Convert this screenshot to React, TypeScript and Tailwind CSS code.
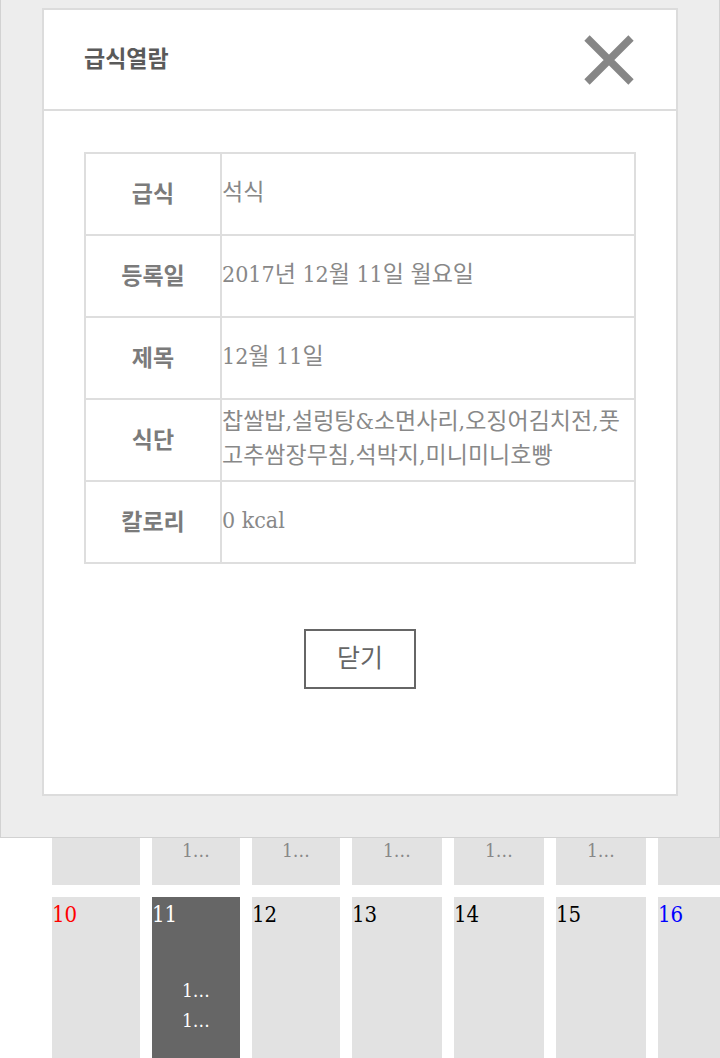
import { Fragment } from "react"

const serif = "font-['DejaVu_Serif_Condensed','DejaVu_Serif','Noto_Sans_CJK_KR',serif]"
const sans = "font-['Noto_Sans_CJK_KR','Noto_Sans',sans-serif]"

const widths = ["w-[88px]", "w-[88px]", "w-[88px]", "w-[90px]", "w-[90px]", "w-[90px]", "w-[90px]"]

const week = [
  { day: "10", color: "text-[#ff0000]" },
  { day: "11", color: "text-white", active: true },
  { day: "12", color: "text-black" },
  { day: "13", color: "text-black" },
  { day: "14", color: "text-black" },
  { day: "15", color: "text-black" },
  { day: "16", color: "text-[#0000ff]" },
]

const rows = [
  { label: "급식", value: "석식" },
  { label: "등록일", value: "2017년 12월 11일 월요일" },
  { label: "제목", value: "12월 11일" },
  { label: "식단", value: "찹쌀밥,설렁탕&소면사리,오징어김치전,풋고추쌈장무침,석박지,미니미니호빵" },
  { label: "칼로리", value: "0 kcal" },
]

const Calendar = () => (
  <div className={`h-[1058px] overflow-hidden pl-[52px] pt-[765px] ${serif}`}>
    <div className="flex gap-3">
      {widths.map((w, i) => (
        <div key={i} className={`${w} h-[120px] shrink-0 bg-[#e2e2e2] flex items-end justify-center pb-[20px]`}>
          {i > 0 && i < 6 && <span className="text-[19px] leading-[30px] text-[#888]">1…</span>}
        </div>
      ))}
    </div>
    <div className="mt-3 flex gap-3">
      {week.map((d, i) => (
        <div
          key={d.day}
          className={`${widths[i]} h-[170px] shrink-0 flex flex-col ${d.active ? "bg-[#666]" : "bg-[#e2e2e2]"}`}
        >
          <span className={`pt-[5px] text-[22px] leading-[26px] ${d.color}`}>{d.day}</span>
          {d.active && (
            <div className="mt-[47px] flex flex-col items-center text-[19px] leading-[30px] text-white">
              <span>1…</span>
              <span>1…</span>
            </div>
          )}
        </div>
      ))}
    </div>
  </div>
)

const CloseIcon = () => (
  <svg width="54" height="54" viewBox="0 0 54 54">
    <path d="M5 5 L49 49 M49 5 L5 49" stroke="#868686" strokeWidth="7.5" fill="none" />
  </svg>
)

const MealDialog = () => (
  <div className="fixed left-0 top-0 w-[720px] h-[838px] bg-[#ededed] border-x border-b border-[#d2d2d2] pl-[41px] pt-[8px]">
    <div className="w-[636px] border-2 border-[#dcdcdc] bg-white">
      <div className="h-[101px] border-b-2 border-[#dcdcdc] flex items-center justify-between pl-[40px] pr-[40px]">
        <h2 className={`${sans} pb-[5px] text-[23px] font-bold text-[#5a5a5a]`}>급식열람</h2>
        <CloseIcon />
      </div>
      <div className="px-[40px] pt-[41px] pb-[105px] flex flex-col items-center">
        <div className="w-[552px] border-t-2 border-l-2 border-[#dedede]">
          {rows.map((r) => (
            <Fragment key={r.label}>
              <div className="flex h-[82px] border-b-2 border-[#dedede]">
                <div className={`w-[136px] shrink-0 border-r-2 border-[#dedede] flex items-center justify-center pb-[4px] ${sans} text-[23px] font-bold text-[#7b7b7b]`}>
                  {r.label}
                </div>
                <div className={`flex-1 border-r-2 border-[#dedede] flex items-center pr-[8px] pb-[4px] ${serif} text-[23px] leading-[34px] text-[#888]`}>
                  {r.value}
                </div>
              </div>
            </Fragment>
          ))}
        </div>
        <button className={`mt-[65px] w-[112px] h-[60px] border-2 border-[#666] pb-[5px] ${sans} text-[25px] text-[#666]`}>
          닫기
        </button>
      </div>
    </div>
  </div>
)

export default function App() {
  return (
    <div className="relative bg-white">
      <Calendar />
      <MealDialog />
    </div>
  )
}
